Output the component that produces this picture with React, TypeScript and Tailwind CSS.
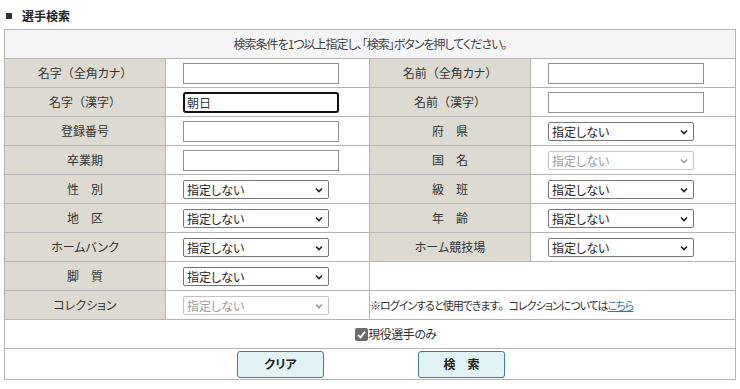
import React from 'react';

const jp = "font-['Noto_Sans_CJK_JP','Noto_Sans',sans-serif] [font-feature-settings:'palt']";

function Chevron({ disabled }: { disabled?: boolean }) {
  return (
    <svg width="8" height="6" viewBox="0 0 8 6" className="absolute right-[6px] top-[7px] pointer-events-none">
      <path d="M1 1.5 L4 4.5 L7 1.5" fill="none" stroke={disabled ? '#999' : '#222'} strokeWidth="1.6" />
    </svg>
  );
}

function Select({ disabled }: { disabled?: boolean }) {
  return (
    <div className="relative w-[146px] h-[19px]">
      <select
        disabled={disabled}
        className={`${jp} appearance-none block w-full h-full rounded-[2px] border bg-white pl-[3px] text-[12px] leading-[17px] outline-none ${
          disabled ? 'border-[#c2c2c2] text-[#9a9a9a]' : 'border-[#767676] text-[#222]'
        }`}
      >
        <option>指定しない</option>
      </select>
      <Chevron disabled={disabled} />
    </div>
  );
}

function TextInput({ value, focused }: { value?: string; focused?: boolean }) {
  return (
    <input
      defaultValue={value}
      className={`${jp} block w-[156px] h-[21px] bg-white px-[2px] text-[12px] outline-none ${
        focused ? 'border-2 border-[#111] rounded-[3px]' : 'border border-[#8f8f8f]'
      }`}
    />
  );
}

// full-width brackets keep their natural width, as in the original
function Paren({ children }: { children: string }) {
  return <span className="[font-feature-settings:normal]">{children}</span>;
}

function Label({ children }: { children: React.ReactNode }) {
  return (
    <td className="bg-[#dddbd1] border border-[#b4b4b4] text-center text-[12px] text-[#333] h-[29px] p-0">
      {children}
    </td>
  );
}

function Field({ children }: { children: React.ReactNode }) {
  return (
    <td className="border border-[#b4b4b4] h-[29px] p-0">
      <div className="flex items-center pl-[17px]">{children}</div>
    </td>
  );
}

export default function App() {
  return (
    <div className={`${jp} w-[740px] h-[389px] bg-white text-[#333]`}>
      <div className="flex items-center gap-[10px] pl-[6px] pt-[2px] h-[29px] text-[12px] font-bold text-[#222]">
        <span className="inline-block w-[6px] h-[6px] bg-[#333]" />
        <span>選手検索</span>
      </div>
      <table className="ml-[4px] w-[731px] border-collapse table-fixed">
        <colgroup>
          <col className="w-[161px]" />
          <col className="w-[204px]" />
          <col className="w-[161px]" />
          <col className="w-[205px]" />
        </colgroup>
        <tbody>
          <tr>
            <td colSpan={4} className="h-[29px] bg-[#f5f5f5] border border-[#b4b4b4] text-center text-[12px] tracking-[-1px] text-[#444] p-0">
              検索条件を1つ以上指定し、「検索」ボタンを押してください。
            </td>
          </tr>
          <tr>
            <Label>名字<Paren>（</Paren>全角カナ<Paren>）</Paren></Label>
            <Field><TextInput /></Field>
            <Label>名前<Paren>（</Paren>全角カナ<Paren>）</Paren></Label>
            <Field><TextInput /></Field>
          </tr>
          <tr>
            <Label>名字<Paren>（</Paren>漢字<Paren>）</Paren></Label>
            <Field><TextInput value="朝日" focused /></Field>
            <Label>名前<Paren>（</Paren>漢字<Paren>）</Paren></Label>
            <Field><TextInput /></Field>
          </tr>
          <tr>
            <Label>登録番号</Label>
            <Field><TextInput /></Field>
            <Label>府　県</Label>
            <Field><Select /></Field>
          </tr>
          <tr>
            <Label>卒業期</Label>
            <Field><TextInput /></Field>
            <Label>国　名</Label>
            <Field><Select disabled /></Field>
          </tr>
          <tr>
            <Label>性　別</Label>
            <Field><Select /></Field>
            <Label>級　班</Label>
            <Field><Select /></Field>
          </tr>
          <tr>
            <Label>地　区</Label>
            <Field><Select /></Field>
            <Label>年　齢</Label>
            <Field><Select /></Field>
          </tr>
          <tr>
            <Label>ホームバンク</Label>
            <Field><Select /></Field>
            <Label>ホーム競技場</Label>
            <Field><Select /></Field>
          </tr>
          <tr>
            <Label>脚　質</Label>
            <Field><Select /></Field>
            <td colSpan={2} className="border border-[#b4b4b4] p-0" />
          </tr>
          <tr>
            <Label>コレクション</Label>
            <Field><Select disabled /></Field>
            <td colSpan={2} className="border border-[#b4b4b4] text-[11px] tracking-[-1px] text-[#333] p-0">
              ※ログインすると使用できます<span className="[font-feature-settings:normal]">。</span>コレクションについては
              <a className="text-[#2b7bb0] underline cursor-pointer">こちら</a>
            </td>
          </tr>
          <tr>
            <td colSpan={4} className="h-[29px] border border-[#b4b4b4] p-0">
              <label className="flex items-center justify-center pl-[52px] text-[12px] text-[#333]">
                <span className="inline-flex items-center justify-center w-[13px] h-[13px] rounded-[2px] bg-[#6b6b6b]">
                  <svg width="11" height="11" viewBox="0 0 11 11">
                    <path d="M2 5.8 L4.5 8.3 L9 2.8" fill="none" stroke="#fff" strokeWidth="1.8" />
                  </svg>
                </span>
                <span className="tracking-[-0.5px]">現役選手のみ</span>
              </label>
            </td>
          </tr>
          <tr>
            <td colSpan={4} className="h-[31px] border border-[#b4b4b4] p-0">
              <div className="flex justify-center gap-[94px] pl-[2px]">
                <button className="w-[87px] h-[27px] rounded-[3px] border border-[#3d7f91] bg-[#e1f3f5] text-[12px] font-bold text-[#222]">
                  クリア
                </button>
                <button className="w-[87px] h-[27px] rounded-[3px] border border-[#3d7f91] bg-[#e1f3f5] text-[12px] font-bold text-[#222]">
                  検　索
                </button>
              </div>
            </td>
          </tr>
        </tbody>
      </table>
    </div>
  );
}
